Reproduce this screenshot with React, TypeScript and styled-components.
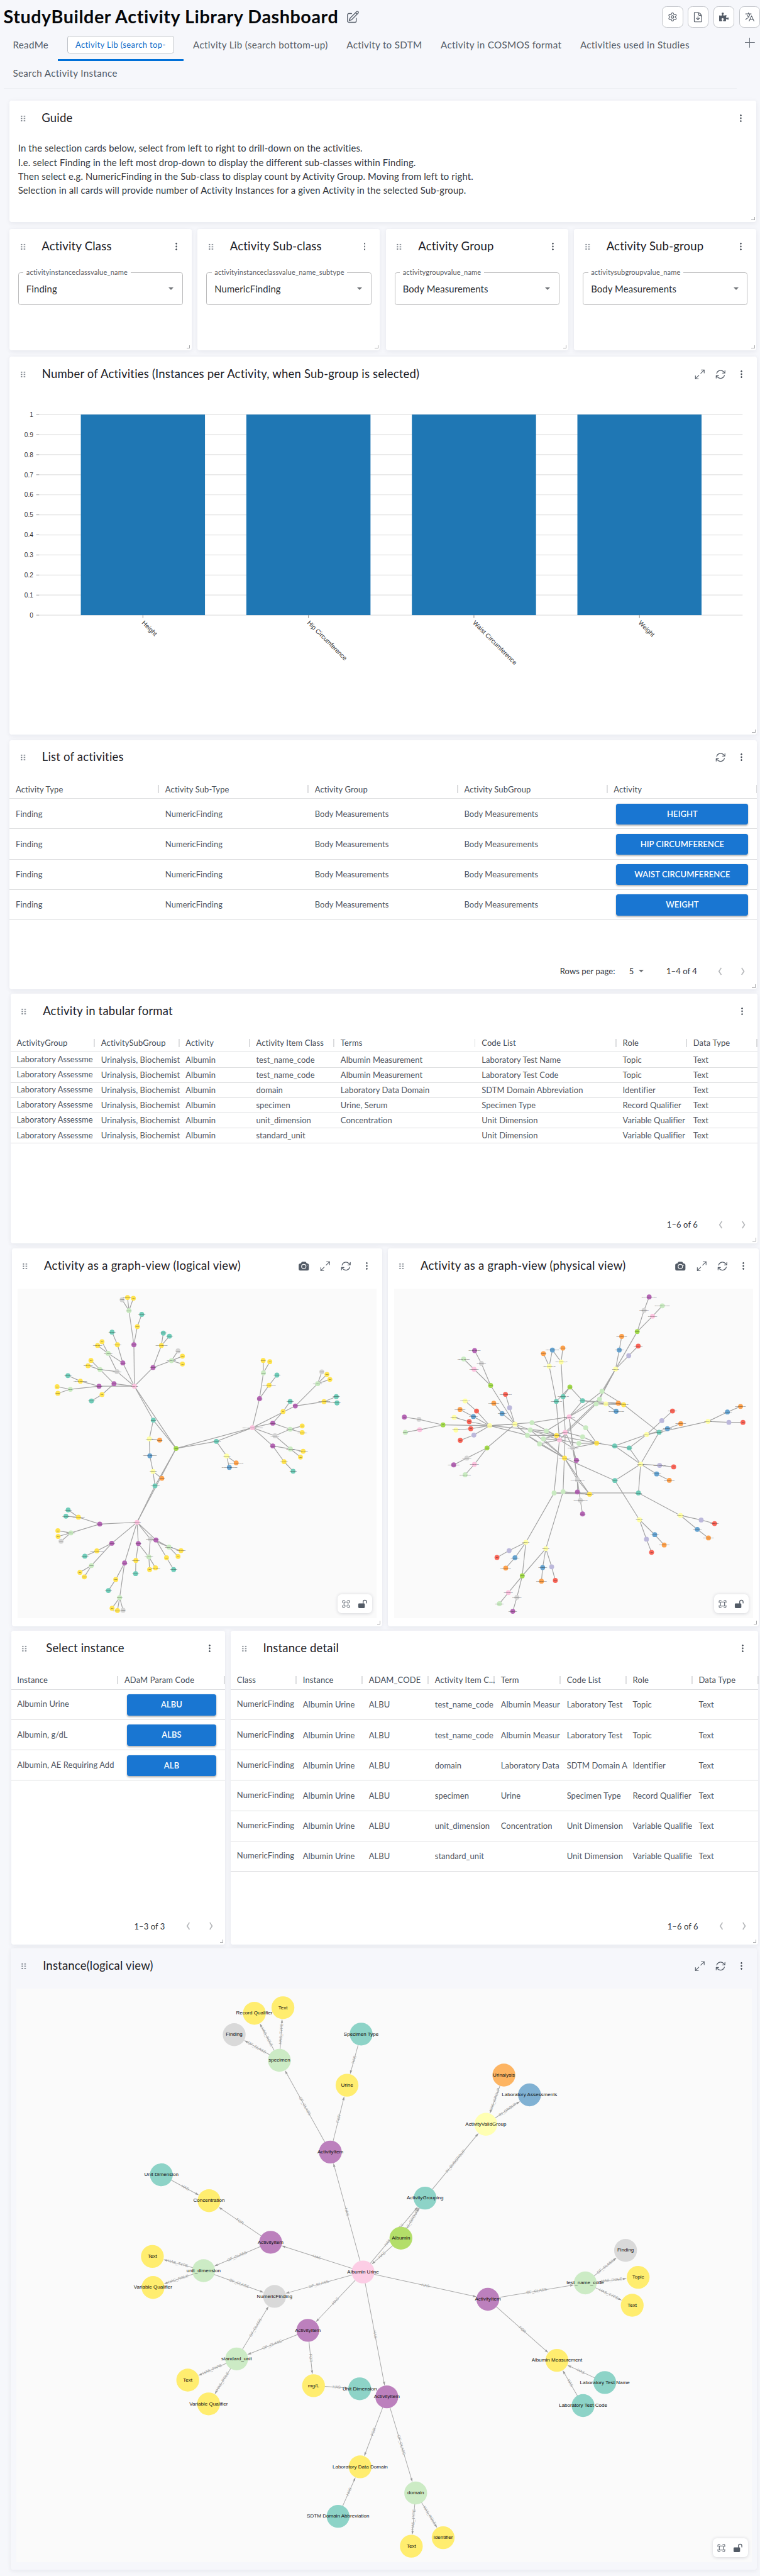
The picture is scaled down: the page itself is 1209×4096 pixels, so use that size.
import React from 'react';
import styled, { createGlobalStyle, css } from 'styled-components';
import {
  HiOutlinePencilSquare,
  HiOutlineDocumentArrowDown,
  HiOutlineLanguage,
  HiOutlineArrowPath,
  HiCamera,
} from 'react-icons/hi2';
import { FaPuzzlePiece } from 'react-icons/fa';
import { Settings, Maximize2 } from 'lucide-react';

const GlobalStyle = createGlobalStyle`
  *, *::before, *::after { box-sizing: border-box; }
  html, body { margin: 0; background: #f6f7fb; }
`;

const Page = styled.div`
  width: 1304px;
  height: 4417px;
  zoom: 0.92715;
  overflow: hidden;
  background: #f6f7fb;
  color: #25282d;
  font-family: Lato, 'Open Sans', sans-serif;
  font-size: 16px;
  font-kerning: normal;
`;

/* ---------- top bar ---------- */

const TopBar = styled.header`
  display: flex;
  align-items: center;
  height: 47px;
  padding: 11px 0 0 6px;
`;

const Title = styled.h1`
  margin: 0 13px 0 0;
  color: #05070a;
  font-size: 31px;
  font-weight: 700;
  letter-spacing: 0.6px;
  line-height: 36px;
  white-space: nowrap;
`;

const EditIcon = styled(HiOutlinePencilSquare)`
  width: 24px;
  height: 24px;
  color: #5b636e;
`;

const Actions = styled.div`
  display: flex;
  gap: 8px;
  margin-left: auto;
`;

const ActionButton = styled.button`
  display: flex;
  align-items: center;
  justify-content: center;
  width: 36px;
  height: 36px;
  padding: 0;
  border: 1px solid #c2c5ca;
  border-radius: 8px;
  background: #fff;
  color: #535b66;
`;

/* ---------- tabs ---------- */

const TabsArea = styled.nav`
  display: flex;
  padding: 1px 0 0 6px;
`;

const TabRows = styled.div`
  width: 1258px;
  height: 104px;
  border-bottom: 2px solid #eceef2;
`;

const TabRow = styled.div`
  display: flex;
`;

const Tab = styled.div<{ $active?: boolean; $short?: boolean }>`
  display: flex;
  align-items: center;
  height: ${(p) => (p.$short ? 40 : 57)}px;
  padding: ${(p) => (p.$short ? 0 : 3)}px 16px 0;
  color: #535b66;
  font-size: 16.4px;
  letter-spacing: 0.35px;
  white-space: nowrap;
  border-bottom: ${(p) => (p.$short ? 0 : 4)}px solid transparent;
  ${(p) =>
    p.$active &&
    css`
      background: linear-gradient(#0070d8, #0070d8) bottom / 100% 4px no-repeat border-box;
      border-radius: 2px 2px 0 0;
    `}
`;

const TabInput = styled.div`
  width: 184px;
  height: 30px;
  padding: 0 12px 0 13px;
  border: 1px solid #bfc3c9;
  border-radius: 4px;
  background: #fff;
  color: #0f6cc9;
  font-size: 14px;
  letter-spacing: 0.4px;
  line-height: 29px;
`;

const AddTab = styled.div`
  width: 17px;
  height: 17px;
  margin: 17px 0 0 14px;
  background: linear-gradient(#6d747e, #6d747e) center / 17px 1.6px no-repeat,
    linear-gradient(#6d747e, #6d747e) center / 1.6px 17px no-repeat;
`;

/* ---------- cards ---------- */

const Row = styled.section<{ $top: number; $left?: number; $h: number }>`
  display: flex;
  gap: 10px;
  height: ${(p) => p.$h}px;
  margin-top: ${(p) => p.$top}px;
  padding-left: ${(p) => p.$left ?? 16.5}px;
`;

const CardBox = styled.article<{ $w: number; $plain?: boolean }>`
  position: relative;
  display: flex;
  flex-direction: column;
  flex: none;
  width: ${(p) => p.$w}px;
  border-radius: 4px;
  background: ${(p) => (p.$plain ? '#f6f7fb' : '#fff')};
  box-shadow: 0 2px 8px rgba(12, 26, 60, 0.07);
`;

const CardHead = styled.div`
  display: flex;
  align-items: center;
  flex: none;
  height: 60px;
  padding: 0 15px 0 18px;
`;

const Drag = styled.div<{ $gap: number }>`
  flex: none;
  width: 10px;
  height: 11px;
  margin-right: ${(p) => p.$gap}px;
  background: radial-gradient(circle, #5f6772 0.9px, transparent 1.3px) 0 0 / 5px 3.9px;
`;

const CardTitle = styled.h2<{ $ls?: number }>`
  margin: 0;
  color: #1c2026;
  font-size: 20px;
  font-weight: 400;
  letter-spacing: ${(p) => p.$ls ?? 0.2}px;
  line-height: 30px;
  white-space: nowrap;
`;

const Tools = styled.div`
  display: flex;
  align-items: center;
  gap: 13px;
  margin-left: auto;
  color: #535b66;
`;

const ToolSlot = styled.div`
  display: flex;
  align-items: center;
  justify-content: center;
  width: 23px;
  height: 24px;
`;

const Kebab = styled.div`
  width: 3px;
  height: 15px;
  background: radial-gradient(circle, #454c56 1.1px, transparent 1.5px) 0 0 / 3px 5px;
`;

const Grip = styled.div`
  position: absolute;
  right: 3px;
  bottom: 3px;
  width: 6px;
  height: 6px;
  border: solid #a7a8aa;
  border-width: 0 2px 2px 0;
`;

type ToolName = 'camera' | 'expand' | 'refresh';

const Card = ({
  title,
  width,
  tools = [],
  ls,
  dragGap = 27.5,
  plain,
  children,
}: {
  title: string;
  width: number;
  tools?: ToolName[];
  ls?: number;
  dragGap?: number;
  plain?: boolean;
  children?: React.ReactNode;
}) => (
  <CardBox $w={width} $plain={plain}>
    <CardHead>
      <Drag $gap={dragGap} />
      <CardTitle $ls={ls}>{title}</CardTitle>
      <Tools>
        {tools.map((t) => (
          <ToolSlot key={t}>
            {t === 'camera' && <HiCamera size={20} />}
            {t === 'expand' && <Maximize2 size={20} strokeWidth={1.4} />}
            {t === 'refresh' && <HiOutlineArrowPath size={20} />}
          </ToolSlot>
        ))}
        <ToolSlot>
          <Kebab />
        </ToolSlot>
      </Tools>
    </CardHead>
    {children}
    {!plain && <Grip />}
  </CardBox>
);

const GuideText = styled.div`
  padding: 9px 15px 0;
  color: #33373d;
  letter-spacing: 0.15px;
  line-height: 24px;
`;

/* ---------- select field ---------- */

const Field = styled.div`
  position: relative;
  display: flex;
  align-items: center;
  justify-content: space-between;
  height: 56px;
  margin: 14.5px 15px 0;
  padding: 0 15px 0 13px;
  border: 1px solid #bcbcbd;
  border-radius: 4px;
  color: #2b2e33;
  letter-spacing: 0.15px;
`;

const FieldLabel = styled.label`
  position: absolute;
  top: -9px;
  left: 8px;
  padding: 0 5px;
  background: #fff;
  color: #5c6066;
  font-size: 12px;
  letter-spacing: 0.16px;
  line-height: 15px;
`;

const Caret = styled.span`
  width: 0;
  height: 0;
  border: 5px solid transparent;
  border-top-color: #6f7276;
  border-bottom-width: 0;
`;

/* ---------- table ---------- */

const TableBody = styled.div`
  margin-top: 9px;
`;

const TR = styled.div<{ $cols: string; $h: number }>`
  display: grid;
  grid-template-columns: ${(p) => p.$cols};
  height: ${(p) => p.$h}px;
  border-bottom: 1px solid #dcdddf;
`;

const TH = styled.div`
  display: flex;
  align-items: center;
  min-width: 0;
  padding-left: 10.5px;
  color: #444b55;
  font-size: 14px;
  letter-spacing: 0.14px;
  white-space: nowrap;
  background: linear-gradient(#d9dadc, #d9dadc) right center / 2px 14px no-repeat;
`;

const TD = styled.div<{ $lift?: boolean }>`
  display: flex;
  align-items: center;
  min-width: 0;
  padding: 0 0 ${(p) => (p.$lift ? 2 : 0)}px 10.5px;
  color: #50565f;
  font-size: 14px;
  letter-spacing: 0.06px;
  white-space: nowrap;
`;

const ButtonCell = styled.div`
  padding: 8px 15px 0;
`;

const ActionLink = styled.button`
  display: block;
  width: 100%;
  height: 36px;
  padding: 0;
  border: 0;
  border-radius: 4px;
  background: #1976d2;
  box-shadow: 0 2px 3px rgba(0, 0, 0, 0.3);
  color: #fff;
  font: 600 14px/36px Lato, sans-serif;
  letter-spacing: 0.1px;
`;

const Footer = styled.div`
  display: flex;
  align-items: center;
  justify-content: flex-end;
  height: 63px;
  margin-top: auto;
  padding-right: 18px;
  color: #30343a;
  font-size: 14px;
  letter-spacing: 0.1px;
`;

const PageSize = styled.span`
  display: flex;
  align-items: center;
  gap: 8px;
  margin: 0 39px 0 24px;
`;

const Range = styled.span`
  margin-right: 34px;
`;

const Chevron = styled.svg`
  width: 11px;
  height: 16px;
  fill: none;
  stroke: #b5b7ba;
  stroke-width: 1.8;
  & + & {
    margin-left: 29px;
  }
`;

type TableProps = {
  cols: string;
  head: string[];
  rows: string[][];
  rowHeight: number;
  buttonColumn?: number;
  lift?: boolean;
  range: string;
  pageSize?: string;
};

const Table = ({ cols, head, rows, rowHeight, buttonColumn = -1, lift, range, pageSize }: TableProps) => (
  <>
    <TableBody>
      <TR $cols={cols} $h={32}>
        {head.map((h) => (
          <TH key={h}>{h}</TH>
        ))}
      </TR>
      {rows.map((r, i) => (
        <TR key={i} $cols={cols} $h={rowHeight}>
          {r.map((c, j) =>
            j === buttonColumn ? (
              <ButtonCell key={j}>
                <ActionLink>{c}</ActionLink>
              </ButtonCell>
            ) : (
              <TD key={j} $lift={lift && j === 0}>
                {c}
              </TD>
            ),
          )}
        </TR>
      ))}
    </TableBody>
    <Footer>
      {pageSize && (
        <>
          <span>Rows per page:</span>
          <PageSize>
            {pageSize}
            <Caret />
          </PageSize>
        </>
      )}
      <Range>{range}</Range>
      <Chevron viewBox="0 0 11 16">
        <path d="M8 2 4 8l4 6" />
      </Chevron>
      <Chevron viewBox="0 0 11 16">
        <path d="M3 2l4 6-4 6" />
      </Chevron>
    </Footer>
  </>
);

/* ---------- bar chart ---------- */

const ChartSvg = styled.svg`
  display: block;
  width: 1282px;
  height: 560px;
  font-family: 'Liberation Sans', Arial, sans-serif;
  font-size: 11px;
  fill: #333;
`;

const BarChart = () => {
  const top = 39;
  const step = 34.4;
  const bars = ['Height', 'Hip Circumference', 'Waist Circumference', 'Weight'];
  return (
    <ChartSvg>
      {Array.from({ length: 11 }, (_, i) => {
        const y = top + i * step;
        return (
          <g key={i}>
            <line x1={51} x2={1258} y1={y} y2={y} stroke="#e2e2e2" strokeWidth={1.3} />
            <line x1={46} x2={51} y1={y} y2={y} stroke="#999" />
            <text x={41} y={y + 4} textAnchor="end">
              {(10 - i) / 10}
            </text>
          </g>
        );
      })}
      {bars.map((b, i) => {
        const x = 122.5 + i * 284;
        const bottom = top + step * 10;
        return (
          <g key={b}>
            <rect x={x} y={top} width={213} height={step * 10} fill="#1f77b4" />
            <line x1={x + 106.5} x2={x + 106.5} y1={bottom} y2={bottom + 5} stroke="#888" />
            <text transform={`translate(${x + 104} ${bottom + 14}) rotate(45)`}>{b}</text>
          </g>
        );
      })}
    </ChartSvg>
  );
};

/* ---------- graphs ---------- */

const Canvas = styled.div<{ $w: number; $h: number }>`
  position: relative;
  width: ${(p) => p.$w}px;
  height: ${(p) => p.$h}px;
  margin: 9px 0 0 10px;
  background: #fafafa;
`;

const GraphSvg = styled.svg`
  display: block;
  width: 100%;
  height: 100%;
  font-family: 'Liberation Sans', Arial, sans-serif;
`;

const GraphTools = styled.div`
  position: absolute;
  right: 7px;
  bottom: 8px;
  display: flex;
  align-items: center;
  justify-content: space-between;
  width: 60px;
  height: 33px;
  padding: 0 8px;
  border-radius: 7px;
  background: #fff;
  box-shadow: 0 1px 6px rgba(30, 40, 60, 0.16);
`;

const FitIcon = () => (
  <svg width="14" height="14" viewBox="0 0 16 16" fill="none" stroke="#535b66" strokeWidth="1.3" strokeLinecap="round" strokeLinejoin="round">
    <rect x="4" y="4" width="8" height="8" rx="0.8" />
    <path d="M1.3 5.2V2.3a1 1 0 0 1 1-1h2.9M10.8 1.3h2.9a1 1 0 0 1 1 1v2.9M14.7 10.8v2.9a1 1 0 0 1-1 1h-2.9M5.2 14.7H2.3a1 1 0 0 1-1-1v-2.9" />
  </svg>
);

const UnlockIcon = () => (
  <svg width="17" height="16" viewBox="0 0 17 16">
    <rect x="1" y="7" width="11.2" height="8" rx="1.6" fill="#535b66" />
    <path d="M9.4 7V4.4a2.9 2.9 0 0 1 5.8 0v2" fill="none" stroke="#535b66" strokeWidth="1.4" strokeLinecap="round" />
  </svg>
);

const palette: Record<string, string> = {
  y: '#ffe34f', g: '#d4d4d4', l: '#c9eac1', t: '#6fcbb8', p: '#b465b4', n: '#a2d94c',
  k: '#fcc3df', o: '#fda14c', b: '#65a2cf', c: '#ffffa6', r: '#f86457', v: '#bcb8db',
};

const defaultLabel: Record<string, string> = {
  y: 'Text', g: 'Finding', l: 'specimen', t: 'CTTermRoot', p: 'ActivityItem', n: 'Albumin',
  k: 'Albumin Urine', o: 'Urinalysis', b: 'CTTermContext', c: 'ActivityGroup', r: 'Text', v: '',
};

/* Each entry: id x y colour parents[,..] [label] */
const logicalNodes = `
hub 717 840 n - Albumin
k1 547 594 k hub Albumin, g/dL
k2 1028 758 k hub Albumin, AE Requiring Additional Data
k3 558 1132 k hub Albumin Urine
a1 545 430 p k1
a2 525 295 l a1
a3 497 252 g a2
a4 519 243 y a2 Record Qualifier
a5 543 246 y a2
a6 559 358 y a1 Serum
a7 577 310 t a6
b1 500 502 p k1
b2 478 430 y b1 Concentration
b3 456 380 t b2
b4 440 464 l b1 unit_dimension
b5 415 418 y b4
b6 397 433 y b4 Variable Qualifier
b7 476 536 g k1,b4 NumericFinding
c1 464 584 p k1
c2 407 528 l c1,b7
c3 370 492 y c2
c4 358 513 y c2 Variable Qualifier
c5 415 627 y c1 g/dL
c6 372 652 t c5
d1 403 594 p k1
d2 327 574 y d1 Laboratory Data Domain
d3 276 552 t d2
d4 286 606 l d1 domain
d5 232 596 y d4
d6 235 622 y d4 Identifier
e1 623 520 p k1
e2 657 433 y e1 Albumin Measurement
e3 665 384 t e2
e4 690 396 t e2
e5 698 493 l e1 test_name_code
e6 725 454 g e5
e7 743 475 y e5 Topic
e8 743 506 y e5
f1 624 728 t k1,hub Grouping
f2 608 802 c f1 ActivityGroup
f3 650 807 o f2
f4 610 869 b f2 Laboratory Assessments
f5 623 931 c f4 ActivityGroup
f6 659 958 o f5
f7 631 988 t f5,hub,k3 ActivityGrouping
g1 406 1139 p k3
g2 319 1112 y g1 Albumin Measurement
g3 277 1083 t g2
g4 268 1108 t g2
g5 288 1174 l g1 test_name_code
g6 235 1165 y g5
g7 236 1188 y g5 Topic
g8 248 1207 g g5
h1 455 1215 p k3
h2 394 1245 y h1 Laboratory Data Domain
h3 345 1266 t h2
h4 372 1303 l h1 domain
h5 325 1330 y h4
h6 343 1348 y h4 Identifier
i1 507 1293 p k3
i2 471 1358 y i1 Urine
i3 441 1402 t i2
i4 487 1430 l i1
i5 456 1472 y i4
i6 478 1481 y i4 Record Qualifier
i7 501 1480 g i4
j1 563 1216 p k3
j2 553 1283 y j1 Concentration
j3 552 1335 t j2
j4 606 1269 l j1 unit_dimension
j5 609 1319 y j4
j6 633 1312 y j4 Variable Qualifier
j7 612 1198 g k3,j4 NumericFinding
l1 635 1202 p k3
l2 688 1230 l l1,j7 standard_unit
l3 737 1244 y l2 Variable Qualifier
l4 725 1267 y l2
l5 678 1272 y l1 mg/L
l6 707 1319 t l5
m1 1057 643 p k2
m2 1073 541 l m1 domain
m3 1072 492 y m2 Identifier
m4 1099 497 y m2
m5 1096 590 y m1 Laboratory Data Domain
m6 1128 550 t m5
n1 1203 672 p k2
n2 1294 584 l n1 test_name_code
n3 1311 537 g n2
n4 1332 547 y n2 Topic
n5 1344 567 y n2
n6 1320 655 y n1 Albumin Measurement
n7 1370 635 t n6
n8 1373 660 t n6
o1 1111 740 p k2
o2 1153 694 y o1 g/L
o3 1182 654 t o2
o4 1182 764 l o1 standard_unit
o5 1231 751 y o4
o6 1231 777 y o4 Variable Qualifier
o7 1120 790 g k2,o4 NumericFinding
p1 1111 830 p k2
p2 1183 842 l p1,o7 unit_dimension
p3 1235 851 y p2 Variable Qualifier
p4 1224 874 y p2
p5 1157 892 y p1 Concentration
p6 1194 930 t p5
q1 881 812 t k2,hub ActivityGrouping
q2 923 870 c q1 ActivityGroup
q3 962 897 o q2 Laboratory Measurements
q4 934 915 b q2 AE Requiring Additional Data`;

const physicalNodes = `
k1 782 715 k - ActivityInstanceValue
k2 766 776 k - Albumin, g/dL
k3 742 806 k - Albumin Urine
g0 797 838 g k1,k2,k3 ActivityInstanceRoot
n0 785 597 n -
t1 729 654 t n0,k3 ActivityGrouping_000
t2 757 635 t n0,k2 ActivityGrouping_000
t3 837 651 t n0,k1 ActivityGrouping
c1 700 515 c t1 ActivityValidGroup_000
c2 749 498 c t2 ActivityValidGroup_000
x1 676 465 o c1
x2 713 451 b c1,c2 Laboratory Assessments
x3 756 443 o c2 Biochemistry
c3 933 664 c t3
x4 975 693 b c3 AE Requiring Additional Data
x5 984 661 o c3,t3
y1 1006 667 y - ActivityItemClass
l1 917 614 l y1,k1 -
l2 907 645 l k1,k2 -
l3 893 664 l y1,k3 -
c4 973 526 c l1,l2,l3 CTTerm_000
n1 1062 378 n c4 domain
g1 1090 294 g n1 CTCodelistValue
p1 1111 241 p g1 SDTM Domain Abbreviation
k4 1125 317 k n1 CTCodelistValue
l4 1165 276 l k4 SDTM Domain Abbreviation
b1 988 451 b c4
o1 998 397 o b1 CTTermNameValue
v1 1027 473 v c4
r1 1066 435 r v1 Laboratory Data
c5 559 744 c - CTTerm_000
c6 455 750 c c5 CTTerm_000
s1 629 738 l c6,k1 -
s2 622 767 l c5,k3 -
s3 610 788 l c5,c6 -
s4 688 771 l c6,k1 -
s5 676 802 l k2,k3 -
s6 660 822 l k3,s3 -
y2 730 789 y s1,s2,s3,s4 unit_dimension
y3 763 878 y s5,s6,s2,s3 ActivityItemClass_000
s7 850 758 l k1 -
s8 837 794 l k2 -
s9 822 820 l k3 -
y4 895 819 y s7,s8,s9,g0,y2 ActivityItemClass
p2 812 887 p g0
g2 816 964 g g0,y3,k1 ActivityInstanceClass_000
p3 816 1012 p g2
g3 828 1045 g g2 ActivityInstanceClass_000
p4 837 1099 p g3
y5 866 1021 y y3,g2 specimen_000
u1 757 1011 l k2,y5 -
u2 720 1016 l k3,y5 -
n2 459 591 n c5
g4 421 504 g n2 CTCodelistValue
p5 393 453 p g4 Laboratory Test Name
k5 391 527 k n2 CTCodelistValue
l5 348 486 l k5 Laboratory Test Name
v2 537 679 v c5
r2 520 626 r v2 Albumin Measurement
b2 506 702 b c5
o2 472 661 o b2 CTTermNameValue
r3 401 692 r c6 g/L
c7 354 652 c r3 UnitDefinition_000
b3 388 714 b c6
o3 333 686 o b3 CTTermNameValue
r4 371 734 r c6 mg/L
c8 309 717 c r4 UnitDefinition
r5 377 762 r c6 g/dL
c9 316 767 c r5 UnitDefinition
v3 390 787 v c6
r6 334 808 r v3
n3 263 747 n c6 unit
g5 164 725 g n3
p6 104 716 p g5 Unit
k6 167 766 k n3 CTCodelist
l6 108 776 l k6 Unit Dim
n4 444 838 n c5
g6 361 878 g n4 CTCodelistValue
p7 307 905 p g6 Laboratory Test Code
k7 392 903 k n4 CTCodelistValue
l7 354 944 l k7 Laboratory Test Code
t4 969 830 t y4 ActivityItem
t5 1029 838 t t4 ActivityItem
c10 1101 785 c t4,t5 CTTerm_000
v4 1163 730 v c10
r7 1207 692 r v4 Record Qualifier
b4 1186 762 b c10
o4 1241 742 o b4 CTTermNameValue
t6 1152 776 t y1,c10
c11 1353 733 c t6 CTTerm_000
b5 1433 696 b c11
o5 1487 674 o b5 CTTermNameValue
v5 1439 737 v c11
r8 1497 737 r v5 Topic
c12 1076 902 c t4,t5,t6 CTTerm_000
v6 1154 907 v c12 CTTermAttributes_000
r9 1212 913 r v6
b6 1142 941 b c12
o6 1194 966 o b6 CTTermNameValue
t7 970 967 t c12,y3 ActivityItem
t8 1067 1016 t c12,u2
c13 1071 1122 c t7 CTTerm_000
v7 1100 1199 v c13
r10 1121 1251 r v7
b7 1134 1181 b c13
o7 1173 1222 o b7 CTTermNameValue
c14 1240 1105 c t8 CTTerm_000
v8 1325 1123 v c14
r11 1380 1137 r v8 Identifier Value
b8 1309 1160 b c14
o8 1355 1194 o b8 CTTermNameValue
c15 604 1211 c u2 CTTerm_000
v9 535 1244 v c15
r12 485 1271 r v9
b9 559 1272 b c15
o9 521 1313 o b9 CTTermNameValue
c16 686 1236 c u1 CTTerm_000
n5 589 1344 n c15,c16
b10 673 1311 b c16
o10 668 1365 o b10 CTTermNameValue
v10 710 1308 v c16
r13 725 1362 r v10 Serum
k8 532 1410 k n5 CTCodelistValue
l8 495 1454 l k8 Specimen Type
g7 567 1429 g n5 CTCodelistValue
p8 550 1484 p g7 Specimen Type`;

type SmallNode = { x: number; y: number; color: string; parents: string[]; label: string };

const parseNodes = (text: string, sx: number, sy: number, left: number, top: number) => {
  const map = new Map<string, SmallNode>();
  text.trim().split('\n').forEach((line) => {
    const [id, x, y, color, parents = '-', ...rest] = line.split(' ');
    const given = rest.join(' ');
    map.set(id, {
      x: (Number(x) - left) / sx,
      y: (Number(y) - top) / sy,
      color,
      parents: parents === '-' ? [] : parents.split(','),
      label: given === '-' ? '' : given || defaultLabel[color],
    });
  });
  return map;
};

const SmallGraph = ({ nodes }: { nodes: Map<string, SmallNode> }) => {
  const list = [...nodes.values()];
  return (
    <GraphSvg>
      <g stroke="#a3a3a3" strokeWidth={1.3}>
        {list.flatMap((n, i) =>
          n.parents.map((p) => {
            const q = nodes.get(p)!;
            return <line key={`${i}-${p}`} x1={q.x} y1={q.y} x2={n.x} y2={n.y} />;
          }),
        )}
      </g>
      {list.map((n, i) => (
        <g key={i}>
          <circle cx={n.x} cy={n.y} r={4.2} fill={palette[n.color]} />
          {n.label && (
            <text x={n.x} y={n.y + 0.8} fontSize={2.1} textAnchor="middle" fill="#222">
              {n.label}
            </text>
          )}
        </g>
      ))}
    </GraphSvg>
  );
};

const logical = parseNodes(logicalNodes, 2.3757, 2.3059, 71, 208);
const physical = parseNodes(physicalNodes, 2.3976, 2.3059, 62, 208);

const Y = '#ffed6f';
const GRAY = '#d9d9d9';
const LG = '#ccebc5';
const TEAL = '#8dd3c7';
const PURPLE = '#bc80bd';

const instanceNodes: Record<string, [number, number, string, string]> = {
  rq: [436.4, 3453.3, Y, 'Record Qualifier'],
  tx1: [485.4, 3443.7, Y, 'Text'],
  fi1: [401.8, 3490, GRAY, 'Finding'],
  sp: [479.3, 3534, LG, 'specimen'],
  st: [619.6, 3489, TEAL, 'Specimen Type'],
  ur: [595.4, 3576.7, Y, 'Urine'],
  A: [566.8, 3691.3, PURPLE, 'ActivityItem'],
  ud: [276.8, 3730.3, TEAL, 'Unit Dimension'],
  co: [358.6, 3774.7, Y, 'Concentration'],
  B: [464.3, 3846, PURPLE, 'ActivityItem'],
  ag: [729.3, 3770.3, TEAL, 'ActivityGrouping'],
  al: [687.9, 3839, '#b3de69', 'Albumin'],
  tx2: [261.4, 3870.3, Y, 'Text'],
  und: [349.3, 3894.7, LG, 'unit_dimension'],
  au: [622.9, 3897, '#fccde5', 'Albumin Urine'],
  vq1: [262.5, 3923.6, Y, 'Variable Qualifier'],
  nf: [471, 3938.9, GRAY, 'NumericFinding'],
  C: [528.2, 3997.1, PURPLE, 'ActivityItem'],
  su: [406, 4046.1, LG, 'standard_unit'],
  tx3: [322.1, 4082.4, Y, 'Text'],
  vq2: [357.9, 4123.2, Y, 'Variable Qualifier'],
  mg: [537.9, 4092, Y, 'mg/L'],
  ud2: [617.1, 4097.3, TEAL, 'Unit Dimension'],
  D: [663.6, 4111.2, PURPLE, 'ActivityItem'],
  ld: [617.9, 4231.2, Y, 'Laboratory Data Domain'],
  sd: [580, 4316.1, TEAL, 'SDTM Domain Abbreviation'],
  dm: [713.2, 4276, LG, 'domain'],
  tx4: [705.7, 4367.3, Y, 'Text'],
  id: [760.3, 4352.7, Y, 'Identifier'],
  ua: [864.5, 3559.3, '#fdb462', 'Urinalysis'],
  la: [908.5, 3593.3, '#80b1d3', 'Laboratory Assessments'],
  av: [833.6, 3643.7, '#ffffb3', 'ActivityValidGroup'],
  fi2: [1073.3, 3860, GRAY, 'Finding'],
  tp: [1094.9, 3906.2, Y, 'Topic'],
  tn: [1004.2, 3915.8, LG, 'test_name_code'],
  tx5: [1084.7, 3954.1, Y, 'Text'],
  E: [837, 3943.8, PURPLE, 'ActivityItem'],
  am: [955.5, 4048.6, Y, 'Albumin Measurement'],
  ln: [1037.7, 4086.6, TEAL, 'Laboratory Test Name'],
  lc: [1000.4, 4126.1, TEAL, 'Laboratory Test Code'],
};

const instanceEdges: [string, string, string][] = [
  ['sp', 'fi1', 'OF_CLASS'], ['sp', 'rq', 'HAS_ROLE'], ['sp', 'tx1', 'HAS_TYPE'],
  ['st', 'ur', 'HAS'], ['A', 'sp', 'OF_CLASS'], ['A', 'ur', 'FOR'], ['au', 'A', 'HAS'],
  ['ud', 'co', 'HAS'], ['B', 'co', 'FOR'], ['au', 'B', 'HAS'], ['B', 'und', 'OF_CLASS'],
  ['und', 'tx2', 'HAS_TYPE'], ['und', 'vq1', 'HAS_ROLE'], ['und', 'nf', 'OF_CLASS'],
  ['au', 'nf', 'OF_CLASS'], ['au', 'C', 'HAS'], ['C', 'su', 'OF_CLASS'], ['C', 'mg', 'FOR'],
  ['su', 'nf', 'OF_CLASS'], ['su', 'tx3', 'HAS_TYPE'], ['su', 'vq2', 'HAS_ROLE'],
  ['mg', 'ud2', 'HAS'], ['au', 'D', 'HAS'], ['D', 'ld', 'FOR'], ['D', 'dm', 'OF_CLASS'],
  ['sd', 'ld', 'HAS'], ['dm', 'tx4', 'HAS_TYPE'], ['dm', 'id', 'HAS_ROLE'], ['au', 'E', 'HAS'],
  ['E', 'tn', 'OF_CLASS'], ['tn', 'fi2', 'OF_CLASS'], ['tn', 'tp', 'HAS_ROLE'], ['tn', 'tx5', 'HAS_TYPE'],
  ['E', 'am', 'FOR'], ['ln', 'am', 'HAS'], ['lc', 'am', 'HAS'], ['al', 'au', 'HAS'],
  ['al', 'ag', 'HAS_GROUPING'], ['au', 'ag', 'HAS_ACTIVITY'], ['ag', 'av', 'IN_SUBGROUP'],
  ['ua', 'av', 'HAS_GROUP'], ['av', 'la', 'IN_GROUP'],
];

const NODE_R = 19.6;
const ORIGIN: [number, number] = [28, 3411];

const InstanceGraph = () => (
  <GraphSvg>
    {instanceEdges.map(([a, b, label], i) => {
      const ax = instanceNodes[a][0] - ORIGIN[0];
      const ay = instanceNodes[a][1] - ORIGIN[1];
      const bx = instanceNodes[b][0] - ORIGIN[0];
      const by = instanceNodes[b][1] - ORIGIN[1];
      const len = Math.hypot(bx - ax, by - ay);
      const ux = (bx - ax) / len;
      const uy = (by - ay) / len;
      const tipX = bx - ux * NODE_R;
      const tipY = by - uy * NODE_R;
      const deg = (Math.atan2(uy, ux) * 180) / Math.PI;
      const flip = deg > 90 || deg < -90 ? deg + 180 : deg;
      return (
        <g key={i}>
          <line x1={ax} y1={ay} x2={tipX - ux * 4} y2={tipY - uy * 4} stroke="#aaaaaa" strokeWidth={1.1} />
          <path d="M0 0-7 2-6-0-7-2Z" fill="#999" transform={`translate(${tipX} ${tipY}) rotate(${deg})`} />
          <text
            transform={`translate(${(ax + bx) / 2} ${(ay + by) / 2}) rotate(${flip})`}
            y={2}
            fontSize={6.8}
            textAnchor="middle"
            fill="#a0a0a0"
          >
            {label}
          </text>
        </g>
      );
    })}
    {Object.values(instanceNodes).map(([x, y, color, label], i) => (
      <g key={i}>
        <circle cx={x - ORIGIN[0]} cy={y - ORIGIN[1]} r={NODE_R} fill={color} />
        <text x={x - ORIGIN[0]} y={y - ORIGIN[1] + 2.4} fontSize={8.7} textAnchor="middle" fill="#111">
          {label}
        </text>
      </g>
    ))}
  </GraphSvg>
);

/* ---------- data ---------- */

const guideLines = [
  'In the selection cards below, select from left to right to drill-down on the activities.',
  'I.e. select Finding in the left most drop-down to display the different sub-classes within Finding.',
  'Then select e.g. NumericFinding in the Sub-class to display count by Activity Group. Moving from left to right.',
  'Selection in all cards will provide number of Activity Instances for a given Activity in the selected Sub-group.',
];

const filters = [
  ['Activity Class', 'activityinstanceclassvalue_name', 'Finding'],
  ['Activity Sub-class', 'activityinstanceclassvalue_name_subtype', 'NumericFinding'],
  ['Activity Group', 'activitygroupvalue_name', 'Body Measurements'],
  ['Activity Sub-group', 'activitysubgroupvalue_name', 'Body Measurements'],
];

const activityRows = ['HEIGHT', 'HIP CIRCUMFERENCE', 'WAIST CIRCUMFERENCE', 'WEIGHT'].map((name) => [
  'Finding', 'NumericFinding', 'Body Measurements', 'Body Measurements', name,
]);

const tabularRows = [
  ['test_name_code', 'Albumin Measurement', 'Laboratory Test Name', 'Topic'],
  ['test_name_code', 'Albumin Measurement', 'Laboratory Test Code', 'Topic'],
  ['domain', 'Laboratory Data Domain', 'SDTM Domain Abbreviation', 'Identifier'],
  ['specimen', 'Urine, Serum', 'Specimen Type', 'Record Qualifier'],
  ['unit_dimension', 'Concentration', 'Unit Dimension', 'Variable Qualifier'],
  ['standard_unit', '', 'Unit Dimension', 'Variable Qualifier'],
].map((r) => ['Laboratory Assessme', 'Urinalysis, Biochemist', 'Albumin', ...r, 'Text']);

const detailRows = [
  ['test_name_code', 'Albumin Measur', 'Laboratory Test', 'Topic'],
  ['test_name_code', 'Albumin Measur', 'Laboratory Test', 'Topic'],
  ['domain', 'Laboratory Data', 'SDTM Domain A', 'Identifier'],
  ['specimen', 'Urine', 'Specimen Type', 'Record Qualifier'],
  ['unit_dimension', 'Concentration', 'Unit Dimension', 'Variable Qualifie'],
  ['standard_unit', '', 'Unit Dimension', 'Variable Qualifie'],
].map((r) => ['NumericFinding', 'Albumin Urine', 'ALBU', ...r, 'Text']);

export default function App() {
  return (
    <>
      <GlobalStyle />
      <Page>
        <TopBar>
          <Title>StudyBuilder Activity Library Dashboard</Title>
          <EditIcon />
          <Actions>
            <ActionButton>
              <Settings size={17} strokeWidth={1.8} />
            </ActionButton>
            <ActionButton>
              <HiOutlineDocumentArrowDown size={20} />
            </ActionButton>
            <ActionButton>
              <FaPuzzlePiece size={17} />
            </ActionButton>
            <ActionButton>
              <HiOutlineLanguage size={19} />
            </ActionButton>
          </Actions>
        </TopBar>

        <TabsArea>
          <TabRows>
            <TabRow>
              <Tab>ReadMe</Tab>
              <Tab $active>
                <TabInput>Activity Lib (search top-</TabInput>
              </Tab>
              <Tab>Activity Lib (search bottom-up)</Tab>
              <Tab>Activity to SDTM</Tab>
              <Tab>Activity in COSMOS format</Tab>
              <Tab>Activities used in Studies</Tab>
            </TabRow>
            <TabRow>
              <Tab $short>Search Activity Instance</Tab>
            </TabRow>
          </TabRows>
          <AddTab />
        </TabsArea>

        <Row $top={21} $h={208} $left={16}>
          <Card title="Guide" width={1282}>
            <GuideText>
              {guideLines.map((l) => (
                <div key={l}>{l}</div>
              ))}
            </GuideText>
          </Card>
        </Row>

        <Row $top={12} $h={208} $left={16}>
          {filters.map(([title, label, value]) => (
            <Card key={title} title={title} width={313}>
              <Field>
                <FieldLabel>{label}</FieldLabel>
                <span>{value}</span>
                <Caret />
              </Field>
            </Card>
          ))}
        </Row>

        <Row $top={11} $h={648}>
          <Card title="Number of Activities (Instances per Activity, when Sub-group is selected)" width={1282.5} tools={['expand', 'refresh']}>
            <BarChart />
          </Card>
        </Row>

        <Row $top={9} $h={428}>
          <Card title="List of activities" width={1282.5} tools={['refresh']}>
            <Table
              cols="repeat(5, 256.5px)"
              head={['Activity Type', 'Activity Sub-Type', 'Activity Group', 'Activity SubGroup', 'Activity']}
              rows={activityRows}
              rowHeight={52}
              buttonColumn={4}
              range="1–4 of 4"
              pageSize="5"
            />
          </Card>
        </Row>

        <Row $top={7} $h={428} $left={18}>
          <Card title="Activity in tabular format" width={1282}>
            <Table
              cols="145px 145px 121px 145px 242px 242px 121px 121px"
              head={['ActivityGroup', 'ActivitySubGroup', 'Activity', 'Activity Item Class', 'Terms', 'Code List', 'Role', 'Data Type']}
              rows={tabularRows}
              rowHeight={26}
              lift
              range="1–6 of 6"
            />
          </Card>
        </Row>

        <Row $top={9} $h={648} $left={20}>
          <Card title="Activity as a graph-view (logical view)" width={636} ls={0.31} tools={['camera', 'expand', 'refresh']}>
            <Canvas $w={616} $h={565}>
              <SmallGraph nodes={logical} />
              <GraphTools>
                <FitIcon />
                <UnlockIcon />
              </GraphTools>
            </Canvas>
          </Card>
          <Card title="Activity as a graph-view (physical view)" width={636} ls={0.31} tools={['camera', 'expand', 'refresh']}>
            <Canvas $w={616} $h={565}>
              <SmallGraph nodes={physical} />
              <GraphTools>
                <FitIcon />
                <UnlockIcon />
              </GraphTools>
            </Canvas>
          </Card>
        </Row>

        <Row $top={8} $h={538} $left={19}>
          <Card title="Select instance" width={367} dragGap={32}>
            <Table
              cols="184px 183px"
              head={['Instance', 'ADaM Param Code']}
              rows={[
                ['Albumin Urine', 'ALBU'],
                ['Albumin, g/dL', 'ALBS'],
                ['Albumin, AE Requiring Add', 'ALB'],
              ]}
              rowHeight={52}
              buttonColumn={1}
              lift
              range="1–3 of 3"
            />
          </Card>
          <Card title="Instance detail" width={905}>
            <Table
              cols="repeat(8, 113.2px)"
              head={['Class', 'Instance', 'ADAM_CODE', 'Activity Item C...', 'Term', 'Code List', 'Role', 'Data Type']}
              rows={detailRows}
              rowHeight={52}
              lift
              range="1–6 of 6"
            />
          </Card>
        </Row>

        <Row $top={7} $h={1065} $left={18}>
          <Card title="Instance(logical view)" width={1281} tools={['expand', 'refresh']} plain>
            <Canvas $w={1262} $h={983}>
              <InstanceGraph />
              <GraphTools>
                <FitIcon />
                <UnlockIcon />
              </GraphTools>
            </Canvas>
          </Card>
        </Row>
      </Page>
    </>
  );
}
